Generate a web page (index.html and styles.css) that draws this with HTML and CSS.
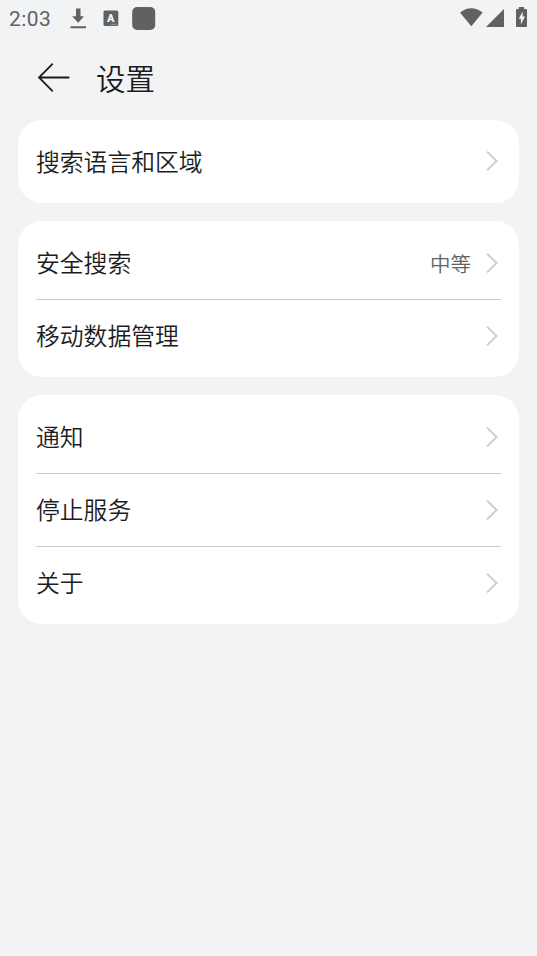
FILE: index.html
```html
<!DOCTYPE html>
<html lang="zh-CN">
<head>
<meta charset="utf-8">
<title>设置</title>
<link rel="stylesheet" href="styles.css">
</head>
<body>
<svg class="defs" aria-hidden="true">
  <symbol id="chevron" viewBox="0 0 14 24"><path d="M2 2.600 11.600 12 2 21.400" fill="none" stroke="#cdcdce" stroke-width="2"/></symbol>
</svg>
<div class="status">
  <span class="clock">2:03</span>
  <svg class="notices" width="90" height="36" viewBox="68 0 90 36" fill="#606163">
    <path d="M76 8.500h4.500v7.800h3.500L78.200 22.800 72.200 16.300H76zM70.500 26.300h15.500v1.900H70.500z"/>
    <rect x="103.500" y="10.500" width="14.800" height="15.500" rx="1.500"/>
    <text class="badge" x="110.700" y="22" text-anchor="middle">A</text>
    <path d="M111.500 24.300h5.500" stroke="#c8c9ca" stroke-width="1" stroke-dasharray="1.200 .8"/>
    <rect x="132.200" y="7" width="23" height="23" rx="5"/>
  </svg>
  <svg class="system" width="77" height="36" viewBox="460 0 77 36" fill="#606163">
    <path d="M460 12.500Q471.300 3.800 482.700 12.500L471.300 26.300z"/>
    <path d="M504 9v18h-18z"/>
    <path d="M518.800 9v-2h5.200v2h2q1 0 1 1v16q0 1-1 1h-9q-1 0-1-1V10q0-1 1-1z"/>
    <path d="M522.700 11.500 518.700 18.700h2.200v5.500l4.100-7.600h-2.300z" fill="#f1f3f5"/>
  </svg>
</div>
<header class="header">
  <svg class="back" width="34" height="32" viewBox="0 0 34 32"><path d="M31.700 15.500H2.300M15.300 2.100 2 15.500 15.300 28.900" fill="none" stroke="#1b1c1d" stroke-width="1.800" stroke-linecap="round"/></svg>
  <h1 class="title">设置</h1>
</header>
<main class="groups">
  <section class="card">
    <div class="row"><span class="label">搜索语言和区域</span><svg class="chevron"><use href="#chevron"/></svg></div>
  </section>
  <section class="card">
    <div class="row"><span class="label">安全搜索</span><span class="value">中等</span><svg class="chevron"><use href="#chevron"/></svg></div>
    <div class="row"><span class="label">移动数据管理</span><svg class="chevron"><use href="#chevron"/></svg></div>
  </section>
  <section class="card">
    <div class="row"><span class="label">通知</span><svg class="chevron"><use href="#chevron"/></svg></div>
    <div class="row"><span class="label">停止服务</span><svg class="chevron"><use href="#chevron"/></svg></div>
    <div class="row"><span class="label">关于</span><svg class="chevron"><use href="#chevron"/></svg></div>
  </section>
</main>
</body>
</html>
```
FILE: styles.css
```css
* { box-sizing: border-box; }
body {
  margin: 0;
  min-height: 956px;
  background: #f1f3f5;
  color: #1b1c1d;
  font-family: "Noto Sans CJK SC", sans-serif;
  font-weight: 350;
}
svg { display: block; flex: none; }
.defs { display: none; }
.status { display: flex; height: 36px; align-items: center; }
.clock {
  width: 68px;
  padding: 2px 0 0 9px;
  color: #606163;
  font: 21px/24px Roboto, sans-serif;
  letter-spacing: .4px;
}
.badge { fill: #f1f3f5; font: 900 11px Roboto, sans-serif; }
.system { margin-left: auto; }
.header {
  display: flex;
  align-items: center;
  height: 83.5px;
  padding-left: 37px;
}
.title {
  margin: 0 0 0 25px;
  padding-bottom: 2px;
  font-size: 29.5px;
  line-height: 40px;
  font-weight: 350;
}
.groups {
  display: flex;
  flex-direction: column;
  gap: 18px;
  padding: 0 18px;
}
.card {
  padding: 5.5px 18px;
  border-radius: 24px;
  background: #fff;
}
.row {
  display: flex;
  align-items: center;
  height: 72.600px;
  font-size: 23.800px;
  line-height: 34px;
}
.row + .row { border-top: 1px solid #cbcbcc; }
.label { padding-bottom: 1.500px; }
.value { margin-left: auto; margin-right: 14px; color: #626263; font-size: 20.500px; }
.chevron { width: 14px; height: 24px; margin-left: auto; margin-right: 2px; }
.value + .chevron { margin-left: 0; }
```
